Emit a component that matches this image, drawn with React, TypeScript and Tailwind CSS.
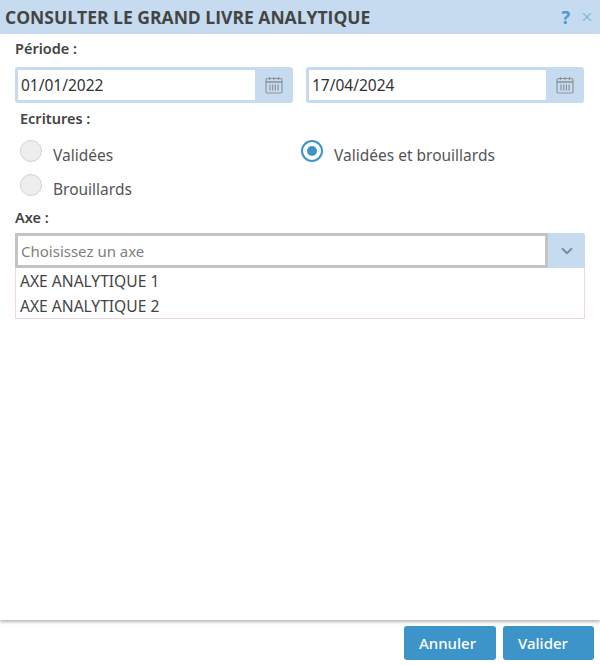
import { ChevronDown, X } from 'lucide-react';

function CalendarIcon() {
  return (
    <svg width="18" height="18" viewBox="0 0 18 18" fill="none" stroke="#8f9498" strokeWidth="1.2">
      <rect x="1" y="2.5" width="16" height="14.5" rx="1.5" />
      <path d="M1 6h16" strokeWidth="1.6" />
      <path d="M4.5 1v3M9 1v3M13.500 1v3" />
      <path d="M5 8.500v6M7.700 8.500v6M10.400 8.500v6M13.100 8.500v6" />
    </svg>
  );
}

function DateField({ value }: { value: string }) {
  return (
    <div className="flex-1 h-[36px] flex rounded-[3px] bg-[#c6dbef] p-[3px] pr-0">
      <div className="flex-1 bg-white pl-[3px] flex items-center text-[15.500px] text-[#333333] pt-[2px]">{value}</div>
      <div className="w-[38px] flex items-center justify-center">
        <CalendarIcon />
      </div>
    </div>
  );
}

function Radio({ label, checked, className }: { label: string; checked?: boolean; className?: string }) {
  return (
    <div className={`h-[22px] flex items-center ${className ?? ''}`}>
      {checked ? (
        <div className="w-[22px] h-[22px] rounded-full border-2 border-[#3d94c8] bg-white flex items-center justify-center">
          <div className="w-[10px] h-[10px] rounded-full bg-[#3d94c8]" />
        </div>
      ) : (
        <div className="w-[22px] h-[22px] rounded-full border border-[#d2d2d2] bg-[#eeeeee]" />
      )}
      <span className="ml-[11px] mt-[8px] leading-[22px] text-[15.500px] text-[#555555]">{label}</span>
    </div>
  );
}

export default function App() {
  return (
    <div className="w-[600px] h-[665px] bg-white flex flex-col font-['Noto_Sans','Open_Sans',sans-serif]">
      {/* Titre */}
      <div className="h-[34px] shrink-0 bg-[#c6dbef] flex items-center justify-between pl-[5px] pr-[6px]">
        <span className="text-[17.500px] font-bold text-[#444444] font-['Open_Sans',sans-serif]">CONSULTER LE GRAND LIVRE ANALYTIQUE</span>
        <div className="flex items-center gap-[10px]">
          <span className="text-[18px] font-bold text-[#4a9ad0] leading-none">?</span>
          <X size={14} strokeWidth={2} className="text-[#7fb6dc]" />
        </div>
      </div>

      {/* Formulaire */}
      <div className="flex-1 px-[15px] shadow-[0_2px_3px_0_#b8b8b8]">
        <div className="mt-[5px] h-[20px] flex items-center text-[14.500px] font-semibold text-[#444444]">Période :</div>
        <div className="mt-[8px] mr-px flex gap-[13px]">
          <DateField value="01/01/2022" />
          <DateField value="17/04/2024" />
        </div>

        <div className="mt-[6px] ml-[5px] h-[20px] flex items-center text-[14.500px] font-semibold text-[#444444]">Ecritures :</div>
        <div className="mt-[11px] ml-[5px] grid grid-cols-[281px_1fr]">
          <div className="flex flex-col gap-[12px]">
            <Radio label="Validées" />
            <Radio label="Brouillards" />
          </div>
          <Radio label="Validées et brouillards" checked className="self-start" />
        </div>

        <div className="mt-[12px] h-[20px] flex items-center text-[14.500px] font-semibold text-[#444444]">Axe :</div>
        <div className="mt-[5px] h-[35px] flex">
          <div className="flex-1 border-[3px] border-[#c4c4c4] bg-white flex items-center pl-[3px] pt-px text-[15px] text-[#808080]">
            Choisissez un axe
          </div>
          <div className="w-[37px] bg-[#c6dbef] rounded-tr-[3px] flex items-center justify-center">
            <ChevronDown size={18} strokeWidth={2.5} className="text-[#7f8a94]" />
          </div>
        </div>
        <div className="h-[51px] border border-t-0 border-[#f0d9de] pl-[4px] pt-[1px] text-[15.600px] text-[#444444]">
          <div className="h-[25px] flex items-center">AXE ANALYTIQUE 1</div>
          <div className="h-[25px] flex items-center">AXE ANALYTIQUE 2</div>
        </div>
      </div>

      {/* Boutons */}
      <div className="h-[45px] shrink-0 flex justify-end items-start gap-[7px] pr-[6px] pt-[6px]">
        <button className="w-[92px] h-[34px] rounded-[3px] bg-[#3d94c8] text-white text-[15px] font-medium pr-[5px]">Annuler</button>
        <button className="w-[91px] h-[34px] rounded-[3px] bg-[#3d94c8] text-white text-[15px] font-medium pr-[11px]">Valider</button>
      </div>
    </div>
  );
}
